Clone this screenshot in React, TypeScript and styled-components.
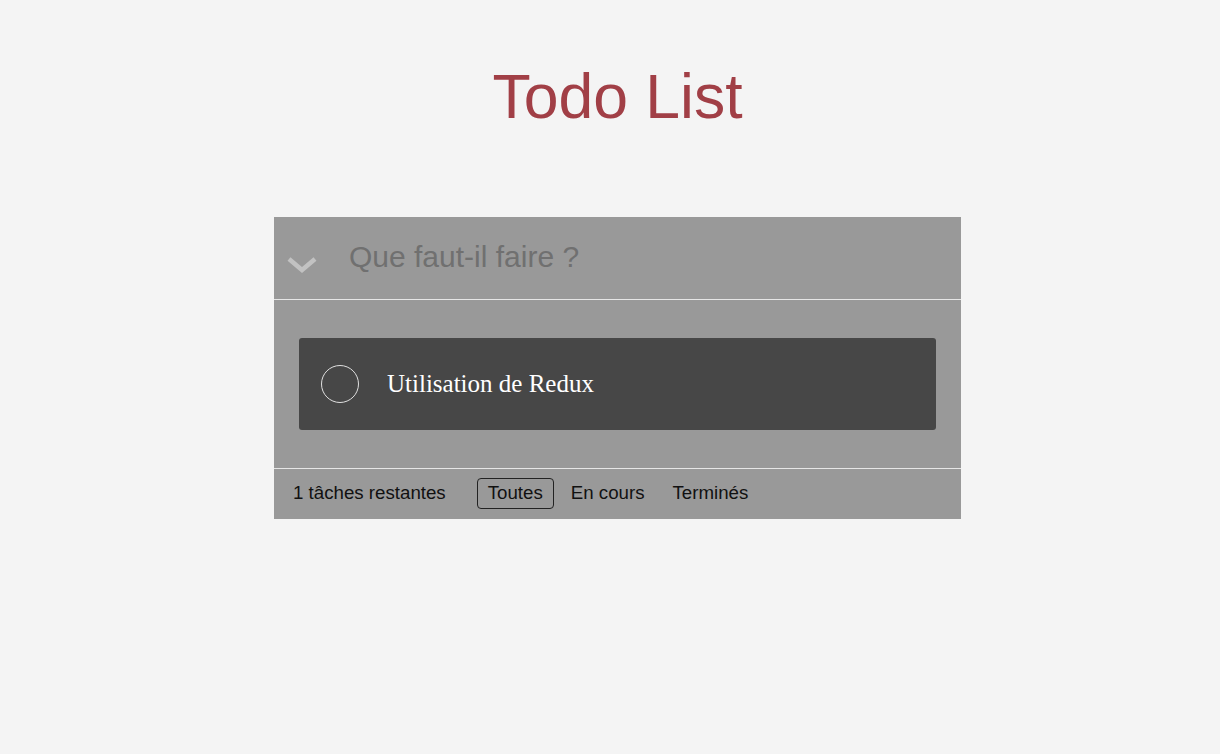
import styled, { createGlobalStyle } from "styled-components"

const GlobalStyle = createGlobalStyle`
    body{
        margin: 0;
        background: #f4f4f4;
        font-family: "Liberation Sans", Arial, sans-serif;
    }
`

const Page = styled.div`
    padding: 66px 0 0 15px;
    display: flex;
    flex-direction: column;
    align-items: center;
`

const Title = styled.h1`
    margin: 0 0 91px;
    font-size: 62.5px;
    line-height: 60px;
    font-weight: 400;
    color: #a13f46;
`

const Panel = styled.section`
    width: 687px;
    background: #999999;
`

const Header = styled.div`
    height: 82px;
    display: flex;
    align-items: center;
    border-bottom: 1px solid #e6e6e6;
`

const ToggleAll = styled.button`
    width: 75px;
    height: 100%;
    padding: 0 0 0 13px;
    margin: 0;
    border: none;
    background: none;
    display: flex;
    align-items: center;
    svg{ margin-top: 14px; }
`

const NewTodo = styled.input`
    flex: 1;
    border: none;
    background: none;
    outline: none;
    font-family: "Liberation Sans", Arial, sans-serif;
    font-size: 30px;
    color: #333;
    padding: 0 0 2px;
    &::placeholder{
        color: #707070;
    }
`

const List = styled.ul`
    list-style: none;
    margin: 0;
    padding: 38px 25px;
    border-bottom: 1px solid #e6e6e6;
`

const Item = styled.li`
    height: 92px;
    background: #474747;
    border-radius: 3px;
    display: flex;
    align-items: center;
    padding-left: 22px;
`

const Check = styled.span<{ $done?: boolean }>`
    width: 38px;
    height: 38px;
    box-sizing: border-box;
    border-radius: 50%;
    border: 1px solid ${props => props.$done ? "#5dc2af" : "#e0e0e0"};
    margin-right: 28px;
`

const Label = styled.span`
    font-family: "Liberation Serif", "Times New Roman", serif;
    font-size: 25px;
    color: #ffffff;
`

const Footer = styled.footer`
    height: 50px;
    box-sizing: border-box;
    padding: 0 0 2px 19px;
    display: flex;
    align-items: center;
    font-size: 18.7px;
    color: #111;
`

const Count = styled.span`
    margin-right: 31px;
`

const Filters = styled.div`
    display: flex;
    gap: 6px;
`

const Filter = styled.button<{ $active?: boolean }>`
    font-family: "Liberation Sans", Arial, sans-serif;
    font-size: 18.7px;
    color: #111;
    background: none;
    height: 31px;
    padding: 0 10px 1px;
    border: 1px solid ${props => props.$active ? "#222" : "transparent"};
    border-radius: 4px;
`

const todos = [{ id: 1, text: "Utilisation de Redux", done: false }]

const App = () => {
    const left = todos.filter(t => !t.done).length
    return (
        <Page>
            <GlobalStyle />
            <Title>Todo List</Title>
            <Panel>
                <Header>
                    <ToggleAll aria-label="Tout cocher">
                        <svg width="30" height="18" viewBox="0 0 30 18">
                            <path d="M2 3 L15 14 L28 3" fill="none" stroke="#c2c2c2" strokeWidth="4.5" />
                        </svg>
                    </ToggleAll>
                    <NewTodo placeholder="Que faut-il faire ?" />
                </Header>
                <List>
                    {todos.map(todo =>
                        <Item key={todo.id}>
                            <Check $done={todo.done} />
                            <Label>{todo.text}</Label>
                        </Item>
                    )}
                </List>
                <Footer>
                    <Count>{left} tâches restantes</Count>
                    <Filters>
                        <Filter $active>Toutes</Filter>
                        <Filter>En cours</Filter>
                        <Filter>Terminés</Filter>
                    </Filters>
                </Footer>
            </Panel>
        </Page>
    )
}
export default App
